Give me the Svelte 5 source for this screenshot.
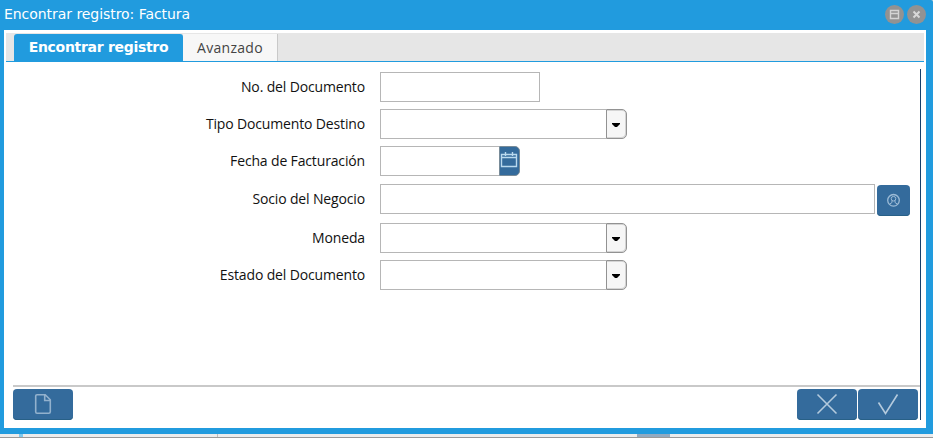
<script>
  const fields = [
    { label: 'No. del Documento', type: 'text', gap: 7 },
    { label: 'Tipo Documento Destino', type: 'list', gap: 7 },
    { label: 'Fecha de Facturación', type: 'date', gap: 8 },
    { label: 'Socio del Negocio', type: 'search', gap: 9 },
    { label: 'Moneda', type: 'list', gap: 7 },
    { label: 'Estado del Documento', type: 'list', gap: 0 }
  ];
</script>

<div class="screen">
  <div class="window">
    <header>
      <span class="title">Encontrar registro: Factura</span>
      <div class="controls">
        <button class="round" aria-label="Maximizar">
          <svg width="19" height="19" viewBox="0 0 19 19"><path d="M5.5 5.5h8v8h-8zM5.5 8.5h8" fill="none" stroke="#d3d3d3" stroke-width="1.4" /></svg>
        </button>
        <button class="round" aria-label="Cerrar">
          <svg width="19" height="19" viewBox="0 0 19 19"><path d="M6.5 6.5l6 6m0-6l-6 6" fill="none" stroke="#d8d8d8" stroke-width="2" /></svg>
        </button>
      </div>
    </header>
    <main>
      <nav>
        <div class="tab active"><span>Encontrar registro</span></div>
        <div class="tab"><span>Avanzado</span></div>
      </nav>
      <div class="panel">
        <div class="form">
          {#each fields as f}
            <div class="row" style:margin-bottom="{f.gap}px">
              <label for={f.label}>{f.label}</label>
              <input id={f.label} class={f.type} />
              {#if f.type === 'list'}
                <button class="drop" aria-label="Abrir">
                  <svg width="19" height="28" viewBox="0 0 19 28"><path d="M5 13h8v1l-3 3H8l-3-3z" fill="#000" /></svg>
                </button>
              {:else if f.type === 'date'}
                <button class="drop cal" aria-label="Calendario">
                  <svg width="19" height="28" viewBox="0 0 19 28"><path d="M1.5 7.5h15v12h-15zM1.5 10.5h15M5.5 5v4M12.5 5v4" fill="none" stroke="#b9d9ee" stroke-width="1.4" /></svg>
                </button>
              {:else if f.type === 'search'}
                <button class="blue person" aria-label="Buscar socio">
                  <svg width="33" height="31" viewBox="0 0 33 31" fill="none" stroke="#9cbbd6"><circle cx="16.5" cy="15.3" r="5.8" stroke-width="1.3" /><circle cx="16.5" cy="13.7" r="2.3" /><path d="M15 15.5v2l-2.5 1.7M18 15.5v2l2.5 1.7" /></svg>
                </button>
              {/if}
            </div>
          {/each}
        </div>
        <footer>
          <button class="blue" aria-label="Nuevo">
            <svg width="60" height="31" viewBox="0 0 60 31"><path d="M24 5.7h8.2l5.1 5.1v12q0 1.5-1.5 1.5H24q-1.3 0-1.3-1.5V7q0-1.3 1.3-1.3zM31.7 6v5.5h5.3" fill="none" stroke="#92b1cd" stroke-width="1.6" /></svg>
          </button>
          <span class="space"></span>
          <button class="blue" aria-label="Cancelar">
            <svg width="60" height="31" viewBox="0 0 60 31"><path d="M20.5 5.5l19 19m0-19l-19 19" fill="none" stroke="#b4cadd" stroke-width="1.6" /></svg>
          </button>
          <button class="blue" aria-label="Aceptar">
            <svg width="60" height="31" viewBox="0 0 60 31"><path d="M20.5 13.5l7 11L39.5 5.5" fill="none" stroke="#b4cadd" stroke-width="1.6" /></svg>
          </button>
        </footer>
      </div>
    </main>
  </div>
  <div class="under"><i class="a"></i><i class="b"></i><i class="c"></i></div>
</div>

<style>
  * { box-sizing: border-box; }
  button { padding: 0; border: 0; margin: 0; display: block; flex: none; }
  svg { display: block; }
  .screen { width: 933px; height: 438px; overflow: hidden; background: #d8d8d8; font-family: "Open Sans", sans-serif; }
  .window { width: 933px; height: 434px; background: #219bde; padding: 0 7px 6px 4px; border-radius: 0 2px 0 0; }
  header { height: 30px; display: flex; justify-content: space-between; }
  .title { font: 14px/28px "DejaVu Sans", sans-serif; color: #fff; letter-spacing: -0.05px; white-space: nowrap; }
  .controls { display: flex; gap: 3px; padding-top: 5px; }
  .round { width: 19px; height: 19px; border-radius: 50%; background: #929292; }
  main { background: #fff; height: 398px; padding: 3px 2px 0; }
  nav { display: flex; height: 29px; background: #e6e6e6; border-bottom: 1px solid #219bde; padding: 1px 0 0 8px; }
  .tab { width: 95px; height: 27px; background: #f7f7f7; border-right: 1px solid #c9c9c9; font-size: 14px; line-height: 27px; letter-spacing: 0.3px; color: #444; text-align: center; white-space: nowrap; }
  .active { width: 169px; background: #219bde; border: 0; border-radius: 3px 3px 0 0; color: #fff; font-family: "DejaVu Sans", sans-serif; font-weight: 700; letter-spacing: -0.3px; }
  .panel { margin: 7px 3px 0 7px; height: 351px; border-right: 1px solid #173e69; display: flex; flex-direction: column; }
  .form { padding-top: 3px; height: 316px; }
  .row { display: flex; height: 30px; }
  label { width: 352px; margin-right: 15px; text-align: right; font-size: 14px; line-height: 30px; letter-spacing: -0.15px; color: #111; white-space: nowrap; }
  input { height: 30px; border: 1px solid #b6b6b6; background: #fff; padding: 0 5px; border-radius: 0; outline: 0; font: 14px "Open Sans", sans-serif; }
  .text { width: 160px; }
  .list { width: 226px; border-right: 0; }
  .date { width: 119px; border-right: 0; }
  .search { width: 495px; }
  .drop { width: 21px; height: 30px; border: 1px solid #929292; border-radius: 0 5px 5px 0; background: #f6f6f6; box-shadow: inset -1px -1px #d4d4d4, inset 0 1px #d4d4d4; }
  .cal { background: #346b9c; border-color: #788b98; box-shadow: none; }
  .blue { width: 60px; height: 31px; background: #346b9c; border-radius: 4px; border: 0; box-shadow: inset 0 -1px #286087; }
  .person { width: 33px; margin: 1px 0 0 2px; }
  footer { display: flex; height: 35px; border-top: 2px solid #c9c9c9; padding-top: 2px; gap: 1px; padding-right: 2px; }
  .space { flex: 1; }
  .under { height: 4px; display: flex; background: #ececec; border-bottom: 1px solid #999; }
  .under i { height: 3px; }
  .a { width: 4px; margin-left: 19px; background: #80c9ed; }
  .b { width: 1px; margin-left: 194px; background: #bdbdbd; }
  .c { width: 33px; margin-left: 419px; background: #91aac1; }
</style>
